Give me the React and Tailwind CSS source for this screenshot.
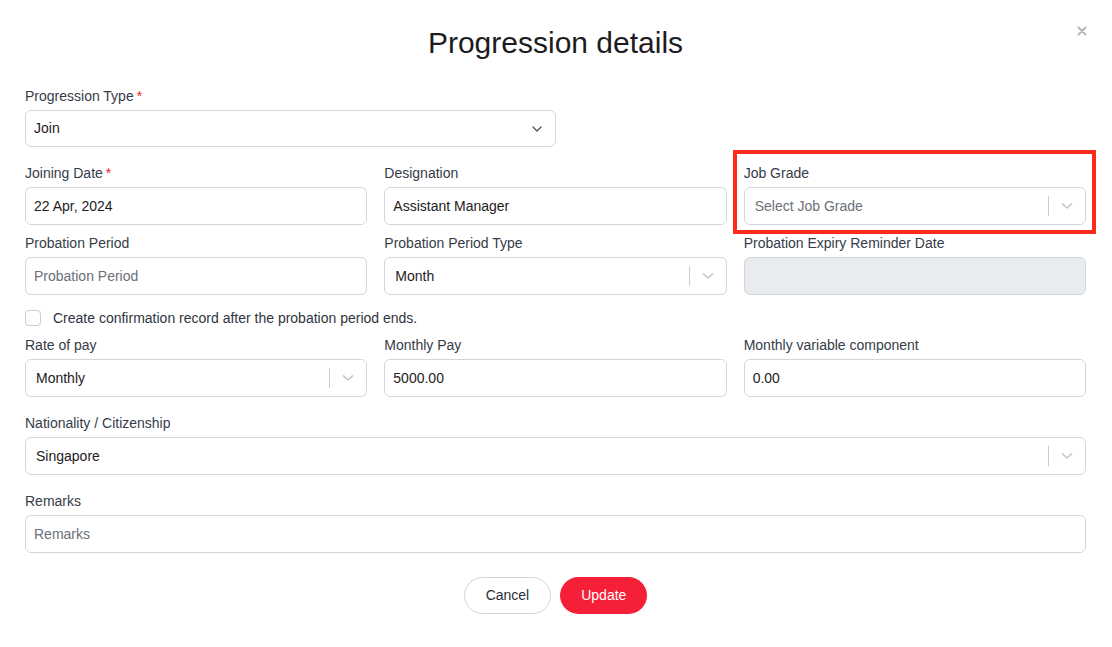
import React from "react";

const font = { fontFamily: '"Liberation Sans", Arial, Helvetica, sans-serif' };

function Label({ children, required }) {
  return (
    <div className="h-5 leading-5 text-[14px] text-[#353c48] mb-1 whitespace-nowrap">
      {children}
      {required && <span className="text-[#f0182d] ml-[3px]">*</span>}
    </div>
  );
}

function TextInput({ value, placeholder, disabled }) {
  return (
    <div
      className={`h-[38px] rounded-[6px] border border-[#d2d6dc] flex items-center px-2 text-[14px] ${
        disabled ? "bg-[#e9ecef]" : "bg-white"
      }`}
    >
      {value ? (
        <span className="text-[#1f2023]">{value}</span>
      ) : (
        <span className="text-[#6b7079]">{placeholder}</span>
      )}
    </div>
  );
}

function RSelect({ value, placeholder }) {
  return (
    <div className="h-[38px] rounded-[6px] border border-[#d2d6dc] bg-white flex items-center text-[14px]">
      <div className="flex-1 pl-[10px]">
        {value ? (
          <span className="text-[#1f2023]">{value}</span>
        ) : (
          <span className="text-[#6b7079]">{placeholder}</span>
        )}
      </div>
      <div className="w-px h-[20px] bg-[#cccccc]" />
      <div className="w-[36px] flex items-center justify-center">
        <svg width="12" height="8" viewBox="0 0 12 8">
          <polyline points="1.5,1.8 6,6 10.5,1.8" fill="none" stroke="#c7c7c7" strokeWidth="1.6" strokeLinecap="round" strokeLinejoin="round" />
        </svg>
      </div>
    </div>
  );
}

export default function App() {
  return (
    <div className="w-[1112px] h-[647px] bg-white relative" style={font}>
      <button className="absolute right-[24px] top-[25px] w-3 h-3 flex items-center justify-center">
        <svg width="10" height="10" viewBox="0 0 10 10">
          <path d="M1.5 1.5 L8.5 8.5 M8.5 1.5 L1.5 8.5" stroke="#b5b5b5" strokeWidth="2" strokeLinecap="round" />
        </svg>
      </button>

      <div className="pt-[25px] pl-[25px] pr-[26px]">
        <h1 className="text-center text-[30px] leading-[36px] text-[#1c1c1e] font-normal">
          Progression details
        </h1>

        <div className="mt-[25px] w-[531px]">
          <Label required>Progression Type</Label>
          <div className="h-[37px] rounded-[6px] border border-[#d2d6dc] bg-white flex items-center px-2 text-[14px]">
            <span className="flex-1 text-[#1f2023]">Join</span>
            <svg width="10" height="6" viewBox="0 0 10 6" className="mr-[5px]">
              <polyline points="1,1 5,5 9,1" fill="none" stroke="#4a515d" strokeWidth="1.3" strokeLinecap="round" strokeLinejoin="round" />
            </svg>
          </div>
        </div>

        <div className="mt-4 grid grid-cols-3 gap-x-[17px] gap-y-2">
          <div>
            <Label required>Joining Date</Label>
            <TextInput value="22 Apr, 2024" />
          </div>
          <div>
            <Label>Designation</Label>
            <TextInput value="Assistant Manager" />
          </div>
          <div className="relative">
            <div className="absolute -left-[11px] -right-[10px] -top-[13px] -bottom-[9px] border-[4px] border-[#ff2a1a] pointer-events-none" />
            <Label>Job Grade</Label>
            <RSelect placeholder="Select Job Grade" />
          </div>

          <div>
            <Label>Probation Period</Label>
            <TextInput placeholder="Probation Period" />
          </div>
          <div>
            <Label>Probation Period Type</Label>
            <RSelect value="Month" />
          </div>
          <div>
            <Label>Probation Expiry Reminder Date</Label>
            <TextInput disabled />
          </div>
        </div>

        <div className="mt-[13px] h-5 flex items-center gap-3">
          <div className="w-4 h-4 rounded-[4px] border border-[#c9ccd1] bg-white" />
          <span className="text-[14px] text-[#2f3540]">
            Create confirmation record after the probation period ends.
          </span>
        </div>

        <div className="mt-[7px] grid grid-cols-3 gap-x-[17px]">
          <div>
            <Label>Rate of pay</Label>
            <RSelect value="Monthly" />
          </div>
          <div>
            <Label>Monthly Pay</Label>
            <TextInput value="5000.00" />
          </div>
          <div>
            <Label>Monthly variable component</Label>
            <TextInput value="0.00" />
          </div>
        </div>

        <div className="mt-4">
          <Label>Nationality / Citizenship</Label>
          <RSelect value="Singapore" />
        </div>

        <div className="mt-4">
          <Label>Remarks</Label>
          <TextInput placeholder="Remarks" />
        </div>

        <div className="mt-6 flex justify-center gap-[9px]">
          <button className="h-[37px] px-[21px] rounded-full border border-[#cfd3d8] bg-white text-[14px] text-[#2a2f38]">
            Cancel
          </button>
          <button className="h-[37px] px-[21px] rounded-full bg-[#f61f38] text-[14px] text-white">
            Update
          </button>
        </div>
      </div>
    </div>
  );
}
